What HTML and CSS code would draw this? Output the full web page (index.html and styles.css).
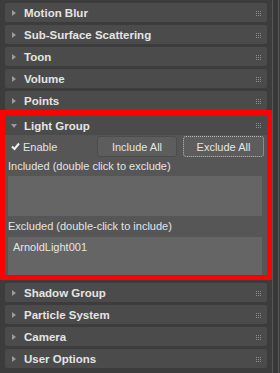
FILE: index.html
```html
<!DOCTYPE html>
<html lang="en">
<head>
    <meta charset="UTF-8">
    <title>Render Setup - Arnold</title>
    <link rel="stylesheet" href="styles.css">
</head>
<body>

    <div class="panel">

        <!-- Rollouts -->
        <div class="rollouts">
            <div class="rollout"><div class="head"><span class="arrow"></span><span class="title">Motion Blur</span><svg class="grip" viewBox="0 0 5 5"><path d="M0 0h1v1H0zM2 0h1v1H2zM4 0h1v1H4zM0 2h1v1H0zM2 2h1v1H2zM4 2h1v1H4zM0 4h1v1H0zM2 4h1v1H2zM4 4h1v1H4z"/></svg></div></div>
            <div class="rollout"><div class="head"><span class="arrow"></span><span class="title">Sub-Surface Scattering</span><svg class="grip" viewBox="0 0 5 5"><path d="M0 0h1v1H0zM2 0h1v1H2zM4 0h1v1H4zM0 2h1v1H0zM2 2h1v1H2zM4 2h1v1H4zM0 4h1v1H0zM2 4h1v1H2zM4 4h1v1H4z"/></svg></div></div>
            <div class="rollout"><div class="head"><span class="arrow"></span><span class="title">Toon</span><svg class="grip" viewBox="0 0 5 5"><path d="M0 0h1v1H0zM2 0h1v1H2zM4 0h1v1H4zM0 2h1v1H0zM2 2h1v1H2zM4 2h1v1H4zM0 4h1v1H0zM2 4h1v1H2zM4 4h1v1H4z"/></svg></div></div>
            <div class="rollout"><div class="head"><span class="arrow"></span><span class="title">Volume</span><svg class="grip" viewBox="0 0 5 5"><path d="M0 0h1v1H0zM2 0h1v1H2zM4 0h1v1H4zM0 2h1v1H0zM2 2h1v1H2zM4 2h1v1H4zM0 4h1v1H0zM2 4h1v1H2zM4 4h1v1H4z"/></svg></div></div>
            <div class="rollout"><div class="head"><span class="arrow"></span><span class="title">Points</span><svg class="grip" viewBox="0 0 5 5"><path d="M0 0h1v1H0zM2 0h1v1H2zM4 0h1v1H4zM0 2h1v1H0zM2 2h1v1H2zM4 2h1v1H4zM0 4h1v1H0zM2 4h1v1H2zM4 4h1v1H4z"/></svg></div></div>

            <!-- Light Group (abierto, marcado en rojo) -->
            <div class="rollout open highlight">
                <div class="head"><span class="arrow down"></span><span class="title">Light Group</span><svg class="grip" viewBox="0 0 5 5"><path d="M0 0h1v1H0zM2 0h1v1H2zM4 0h1v1H4zM0 2h1v1H0zM2 2h1v1H2zM4 2h1v1H4zM0 4h1v1H0zM2 4h1v1H2zM4 4h1v1H4z"/></svg></div>
                <div class="body">
                    <div class="row">
                        <label class="check"><svg class="tick" viewBox="0 0 9 9"><path d="M1 4.5l2.5 2.5L8 1.5" /></svg>Enable</label>
                        <button class="btn">Include All</button>
                        <button class="btn focus">Exclude All</button>
                    </div>
                    <div class="label">Included (double click to exclude)</div>
                    <div class="list"></div>
                    <div class="label second">Excluded (double-click to include)</div>
                    <div class="list last"><div class="item">ArnoldLight001</div></div>
                </div>
            </div>

            <div class="rollout"><div class="head"><span class="arrow"></span><span class="title">Shadow Group</span><svg class="grip" viewBox="0 0 5 5"><path d="M0 0h1v1H0zM2 0h1v1H2zM4 0h1v1H4zM0 2h1v1H0zM2 2h1v1H2zM4 2h1v1H4zM0 4h1v1H0zM2 4h1v1H2zM4 4h1v1H4z"/></svg></div></div>
            <div class="rollout"><div class="head"><span class="arrow"></span><span class="title">Particle System</span><svg class="grip" viewBox="0 0 5 5"><path d="M0 0h1v1H0zM2 0h1v1H2zM4 0h1v1H4zM0 2h1v1H0zM2 2h1v1H2zM4 2h1v1H4zM0 4h1v1H0zM2 4h1v1H2zM4 4h1v1H4z"/></svg></div></div>
            <div class="rollout"><div class="head"><span class="arrow"></span><span class="title">Camera</span><svg class="grip" viewBox="0 0 5 5"><path d="M0 0h1v1H0zM2 0h1v1H2zM4 0h1v1H4zM0 2h1v1H0zM2 2h1v1H2zM4 2h1v1H4zM0 4h1v1H0zM2 4h1v1H2zM4 4h1v1H4z"/></svg></div></div>
            <div class="rollout"><div class="head"><span class="arrow"></span><span class="title">User Options</span><svg class="grip" viewBox="0 0 5 5"><path d="M0 0h1v1H0zM2 0h1v1H2zM4 0h1v1H4zM0 2h1v1H0zM2 2h1v1H2zM4 2h1v1H4zM0 4h1v1H0zM2 4h1v1H2zM4 4h1v1H4z"/></svg></div></div>
        </div>

        <!-- Barra de desplazamiento -->
        <div class="scrollbar"></div>

    </div>

</body>
</html>
```

FILE: styles.css
```css
/* Estilos globales */
* {
    margin: 0;
    padding: 0;
    box-sizing: border-box;
}

body {
    background-color: #3c3c3c;
    font-family: 'Liberation Sans', Arial, sans-serif;
    color: #e4e4e4;
}

/* Contenedor principal */
.panel {
    display: flex;
    height: 373px;
    overflow: hidden;
}

.rollouts {
    width: 267px;
    padding: 3px 0 0 5px;
    display: flex;
    flex-direction: column;
    gap: 3px;
}

/* Cabecera de rollout */
.head {
    display: flex;
    align-items: center;
    height: 19px;
    padding: 1px 6px 0 7px;
    background-color: #4b4b4b;
    border-radius: 2px;
}

.arrow {
    width: 0;
    height: 0;
    border-top: 3px solid transparent;
    border-bottom: 3px solid transparent;
    border-left: 4px solid #9a9a9a;
    margin-right: 8px;
}

.arrow.down {
    border-left: 3px solid transparent;
    border-right: 3px solid transparent;
    border-top: 4px solid #9a9a9a;
    border-bottom: none;
    margin-left: -1px;
    margin-right: 7px;
}

.title {
    flex: 1;
    font-size: 11.5px;
    font-weight: bold;
}

.grip {
    width: 5px;
    height: 5px;
    fill: #8c8c8c;
}

/* Rollout abierto */
.highlight {
    border: 5px solid #ff0000;
    margin: -3px -5px 0;
}

.open .head {
    height: 20px;
    border-radius: 0;
}

.body {
    background-color: #565656;
    padding: 1px 0 0 3px;
    font-size: 11px;
}

.row {
    display: flex;
    align-items: center;
    gap: 6px;
    padding-right: 3px;
    height: 21px;
}

.check {
    flex: 1;
    display: flex;
    align-items: center;
    padding-left: 3px;
}

.tick {
    width: 9px;
    height: 9px;
    margin-right: 3px;
    fill: none;
    stroke: #f0f0f0;
    stroke-width: 2;
}

.btn {
    width: 80px;
    height: 21px;
    font-family: inherit;
    font-size: 11px;
    color: #e4e4e4;
    background-color: #5d5d5d;
    border: 1px solid #4c4c4c;
    border-radius: 3px;
}

.btn.focus {
    width: 81px;
    border: 1px dotted #b8b8b8;
}

.label {
    height: 19px;
    line-height: 19px;
}

.label.second {
    height: 21px;
    line-height: 20px;
    padding-bottom: 1px;
}

.list {
    height: 40px;
    margin-right: 5px;
    background-color: #656565;
}

.list.last {
    height: 38px;
}

.item {
    padding: 4px 0 0 5px;
}

/* Barra de desplazamiento */
.scrollbar {
    width: 7px;
    margin-left: 5px;
    background-color: #383838;
    border-left: 1px solid #585858;
    border-right: 1px solid #585858;
}
```
